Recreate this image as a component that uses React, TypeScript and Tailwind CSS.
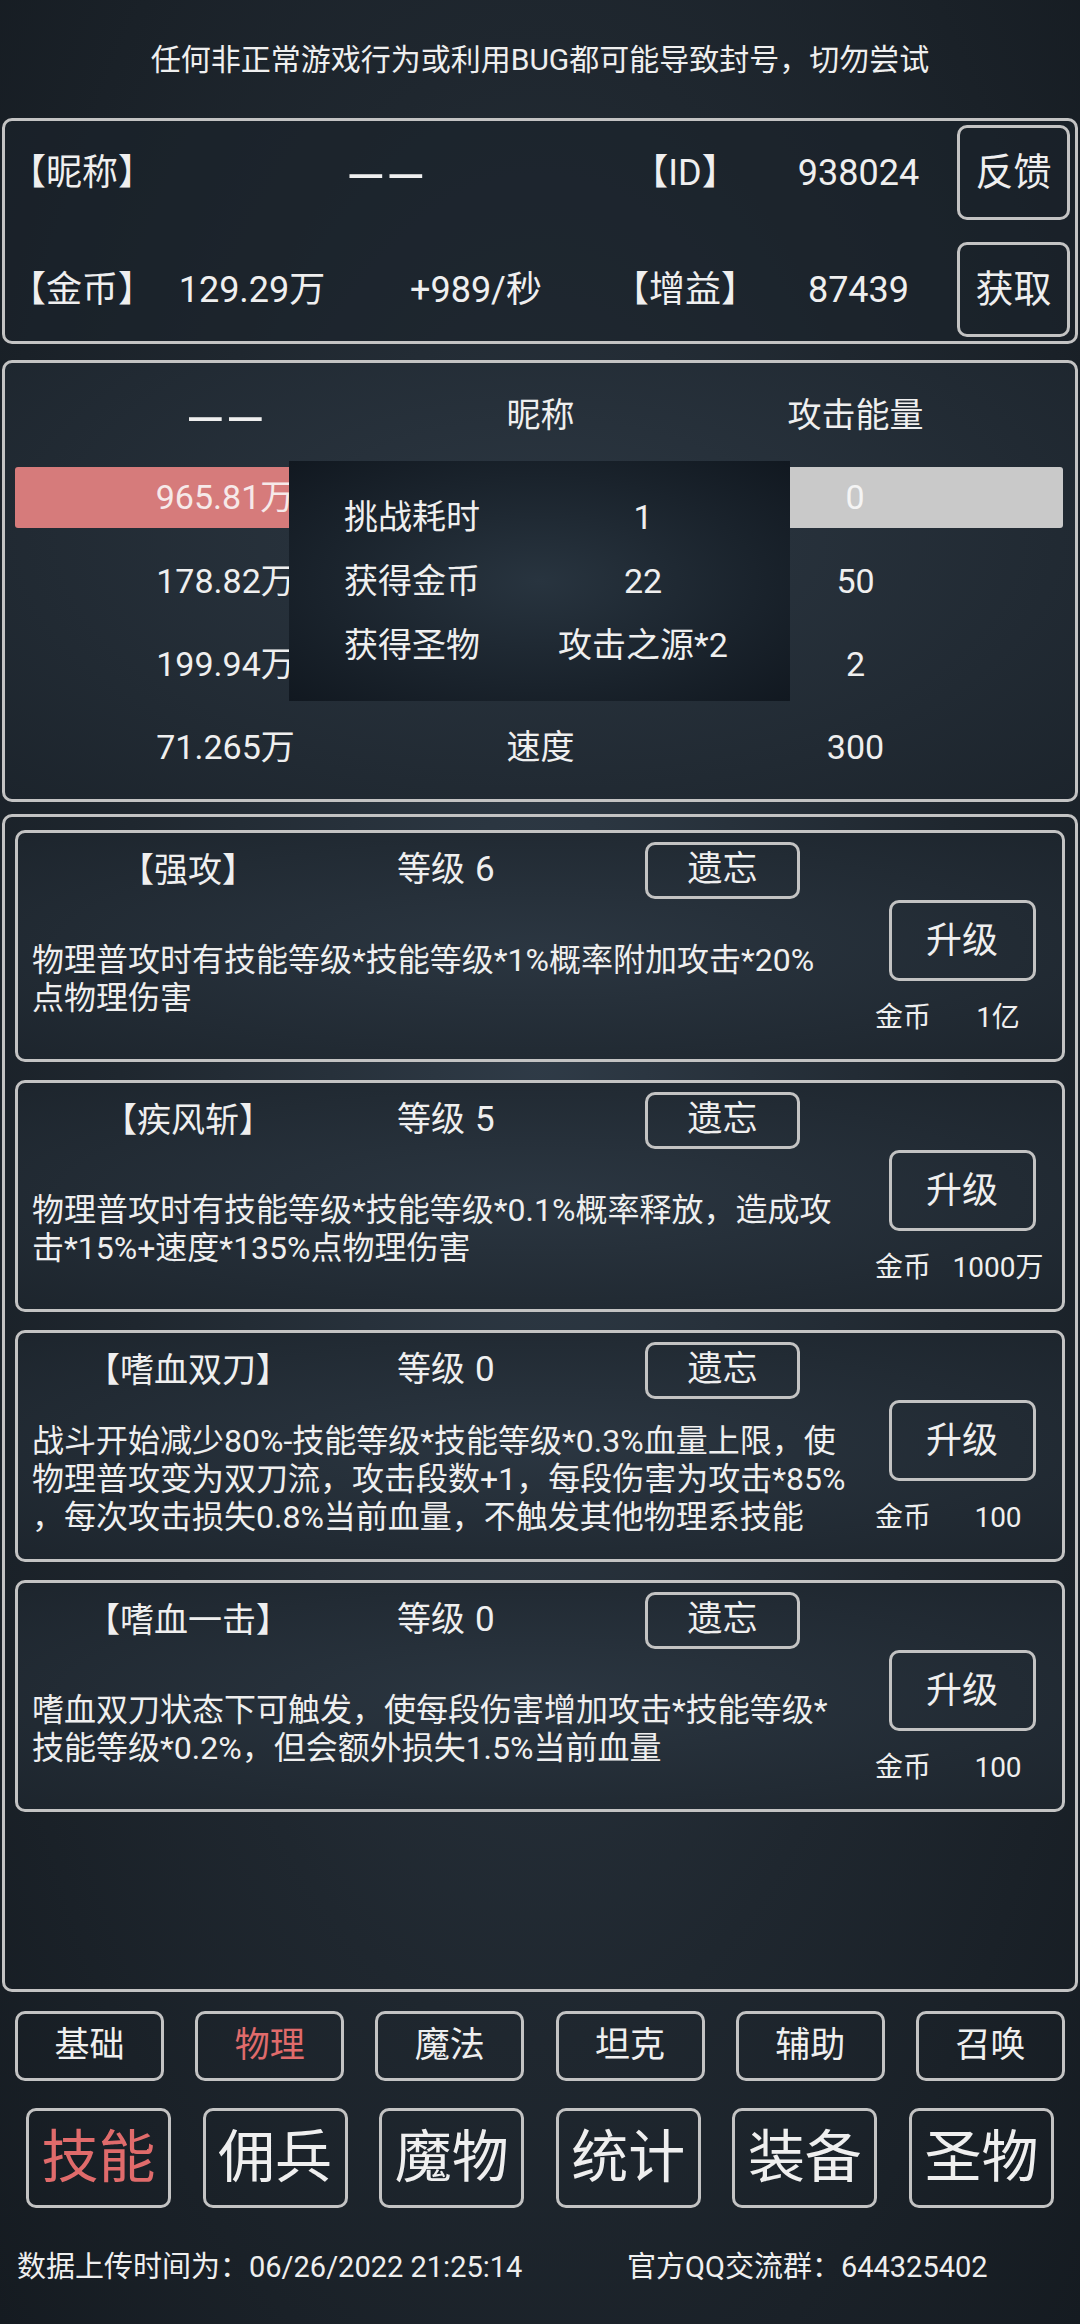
import React from 'react';

type Skill = { name: string; level: number; lines: string[]; cost: string };

const skills: Skill[] = [
  {
    name: '【强攻】',
    level: 6,
    lines: ['物理普攻时有技能等级*技能等级*1%概率附加攻击*20%', '点物理伤害'],
    cost: '1亿',
  },
  {
    name: '【疾风斩】',
    level: 5,
    lines: ['物理普攻时有技能等级*技能等级*0.1%概率释放，造成攻', '击*15%+速度*135%点物理伤害'],
    cost: '1000万',
  },
  {
    name: '【嗜血双刀】',
    level: 0,
    lines: [
      '战斗开始减少80%-技能等级*技能等级*0.3%血量上限，使',
      '物理普攻变为双刀流，攻击段数+1，每段伤害为攻击*85%',
      '，每次攻击损失0.8%当前血量，不触发其他物理系技能',
    ],
    cost: '100',
  },
  {
    name: '【嗜血一击】',
    level: 0,
    lines: ['嗜血双刀状态下可触发，使每段伤害增加攻击*技能等级*', '技能等级*0.2%，但会额外损失1.5%当前血量'],
    cost: '100',
  },
];

const tabs = ['基础', '物理', '魔法', '坦克', '辅助', '召唤'];
const navs = ['技能', '佣兵', '魔物', '统计', '装备', '圣物'];

// empty name placeholder
function Dash() {
  return <span className="inline-block text-[50px] leading-none tracking-[1px] translate-y-[8px]">——</span>;
}

function SkillCard({ skill }: { skill: Skill }) {
  return (
    <div className="h-[232px] flex border-[3px] border-[#c3c3c3] rounded-[10px] bg-[radial-gradient(ellipse_at_center,#2b3641_0%,#1d252d_100%)]">
      {/* left: header + description */}
      <div className="flex-1 flex flex-col">
        <div className="mt-[9px] h-[57px] flex items-center text-[34px]">
          <div className="w-[340px] text-center">{skill.name}</div>
          <div className="w-[287px] pl-[39px]">
            等级<span className="ml-[10px] text-[35px]">{skill.level}</span>
          </div>
          <div className="w-[155px] h-[57px] border-[3px] border-[#c3c3c3] rounded-[10px] flex items-center justify-center text-[35px]">
            遗忘
          </div>
        </div>
        <div className="flex-1 flex items-center pl-[14px] text-[32px] leading-[38px] whitespace-nowrap">
          <div>
            {skill.lines.map((l, i) => (
              <div key={i}>{l}</div>
            ))}
          </div>
        </div>
      </div>
      {/* right: upgrade */}
      <div className="w-[200px] flex flex-col items-center pt-[67px]">
        <div className="w-[147px] h-[81px] border-[3px] border-[#c3c3c3] rounded-[10px] flex items-center justify-center text-[36px]">
          升级
        </div>
        <div className="mt-[17px] h-[40px] w-full flex items-center text-[28px]">
          <div className="w-[82px] text-center">金币</div>
          <div className="w-[108px] text-center">{skill.cost}</div>
        </div>
      </div>
    </div>
  );
}

export default function App() {
  return (
    <div className="w-[1080px] h-[2324px] overflow-hidden font-['Roboto','Noto_Sans_CJK_SC',sans-serif] text-[#efefef] bg-[radial-gradient(ellipse_at_50%_45%,#2f3b47_0%,#1f272f_55%,#151b21_100%)]">
      {/* warning */}
      <div className="h-[118px] flex items-center justify-center text-[30px]">
        任何非正常游戏行为或利用BUG都可能导致封号，切勿尝试
      </div>

      {/* player info */}
      <div className="mx-[2px] h-[226px] border-[3px] border-[#c3c3c3] rounded-[10px] bg-[#1b232b]/60 flex flex-col justify-center gap-[22px] text-[36px]">
        <div className="h-[95px] flex items-center">
          <div className="w-[157px] pl-[5px]">【昵称】</div>
          <div className="w-[448px] text-center">
            <Dash />
          </div>
          <div className="w-[150px] text-center">【ID】</div>
          <div className="w-[197px] text-center">938024</div>
          <div className="w-[113px] h-[95px] border-[3px] border-[#c3c3c3] rounded-[10px] flex items-center justify-center text-[38px]">
            反馈
          </div>
        </div>
        <div className="h-[95px] flex items-center">
          <div className="w-[157px] pl-[5px]">【金币】</div>
          <div className="w-[180px] text-center">129.29万</div>
          <div className="w-[268px] text-center">+989/秒</div>
          <div className="w-[150px] text-center">【增益】</div>
          <div className="w-[197px] text-center">87439</div>
          <div className="w-[113px] h-[95px] border-[3px] border-[#c3c3c3] rounded-[10px] flex items-center justify-center text-[38px]">
            获取
          </div>
        </div>
      </div>

      {/* battle stats */}
      <div className="relative mx-[2px] mt-[16px] h-[442px] border-[3px] border-[#c3c3c3] rounded-[10px] text-[34px] bg-[radial-gradient(ellipse_at_50%_40%,#2c3742_0%,#1c242c_100%)]">
        <div className="mt-[20px] h-[64px] flex items-center ml-[63px]">
          <div className="w-[315px] text-center">
            <Dash />
          </div>
          <div className="w-[315px] text-center">昵称</div>
          <div className="w-[315px] text-center">攻击能量</div>
        </div>
        <div className="mt-[20px] ml-[10px] w-[1048px] h-[61px] flex rounded-[3px] overflow-hidden">
          <div className="w-[525px] bg-[#d67b7b] flex items-center">
            <div className="w-[420px] text-center text-[#f6e9e9]">965.81万</div>
          </div>
          <div className="flex-1 bg-[#c9c9c9] flex items-center justify-end">
            <div className="w-[416px] text-center text-[#f4f4f4]">0</div>
          </div>
        </div>
        <div className="mt-[12px] h-[83px] flex items-center ml-[63px]">
          <div className="w-[315px] text-center">178.82万</div>
          <div className="w-[315px]" />
          <div className="w-[315px] text-center">50</div>
        </div>
        <div className="h-[83px] flex items-center ml-[63px]">
          <div className="w-[315px] text-center">199.94万</div>
          <div className="w-[315px]" />
          <div className="w-[315px] text-center">2</div>
        </div>
        <div className="h-[83px] flex items-center ml-[63px]">
          <div className="w-[315px] text-center">71.265万</div>
          <div className="w-[315px] text-center">速度</div>
          <div className="w-[315px] text-center">300</div>
        </div>

        {/* result popup */}
        <div className="absolute left-[284px] top-[98px] w-[501px] h-[240px] py-[24px] flex flex-col bg-[radial-gradient(ellipse_at_center,#28343f_0%,#111820_100%)]">
          <div className="h-[65px] flex items-center">
            <div className="w-[224px] pl-[55px]">挑战耗时</div>
            <div className="w-[260px] text-center">1</div>
          </div>
          <div className="h-[65px] flex items-center">
            <div className="w-[224px] pl-[55px]">获得金币</div>
            <div className="w-[260px] text-center">22</div>
          </div>
          <div className="h-[65px] flex items-center">
            <div className="w-[224px] pl-[55px]">获得圣物</div>
            <div className="w-[260px] text-center">攻击之源*2</div>
          </div>
        </div>
      </div>

      {/* skills */}
      <div className="mx-[2px] mt-[12px] h-[1178px] border-[3px] border-[#c3c3c3] rounded-[10px] px-[10px] pt-[13px] flex flex-col gap-[18px]">
        {skills.map((s) => (
          <SkillCard key={s.name} skill={s} />
        ))}
      </div>

      {/* category tabs */}
      <div className="mt-[19px] px-[15px] flex justify-between">
        {tabs.map((t) => (
          <div
            key={t}
            className={
              'w-[149px] h-[70px] border-[3px] border-[#c3c3c3] rounded-[10px] flex items-center justify-center text-[35px] ' +
              (t === '物理' ? 'text-[#e06b6b]' : '')
            }
          >
            {t}
          </div>
        ))}
      </div>

      {/* main nav */}
      <div className="mt-[27px] px-[26px] flex justify-between">
        {navs.map((t) => (
          <div
            key={t}
            className={
              'w-[145px] h-[100px] border-[3px] border-[#c3c3c3] rounded-[10px] flex items-center justify-center text-[57px] ' +
              (t === '技能' ? 'text-[#e06b6b]' : '')
            }
          >
            {t}
          </div>
        ))}
      </div>

      {/* footer */}
      <div className="mt-[40px] h-[40px] flex items-center text-[29px]">
        <div className="w-[627px] pl-[17px]">数据上传时间为：06/26/2022 21:25:14</div>
        <div>官方QQ交流群：644325402</div>
      </div>
    </div>
  );
}
